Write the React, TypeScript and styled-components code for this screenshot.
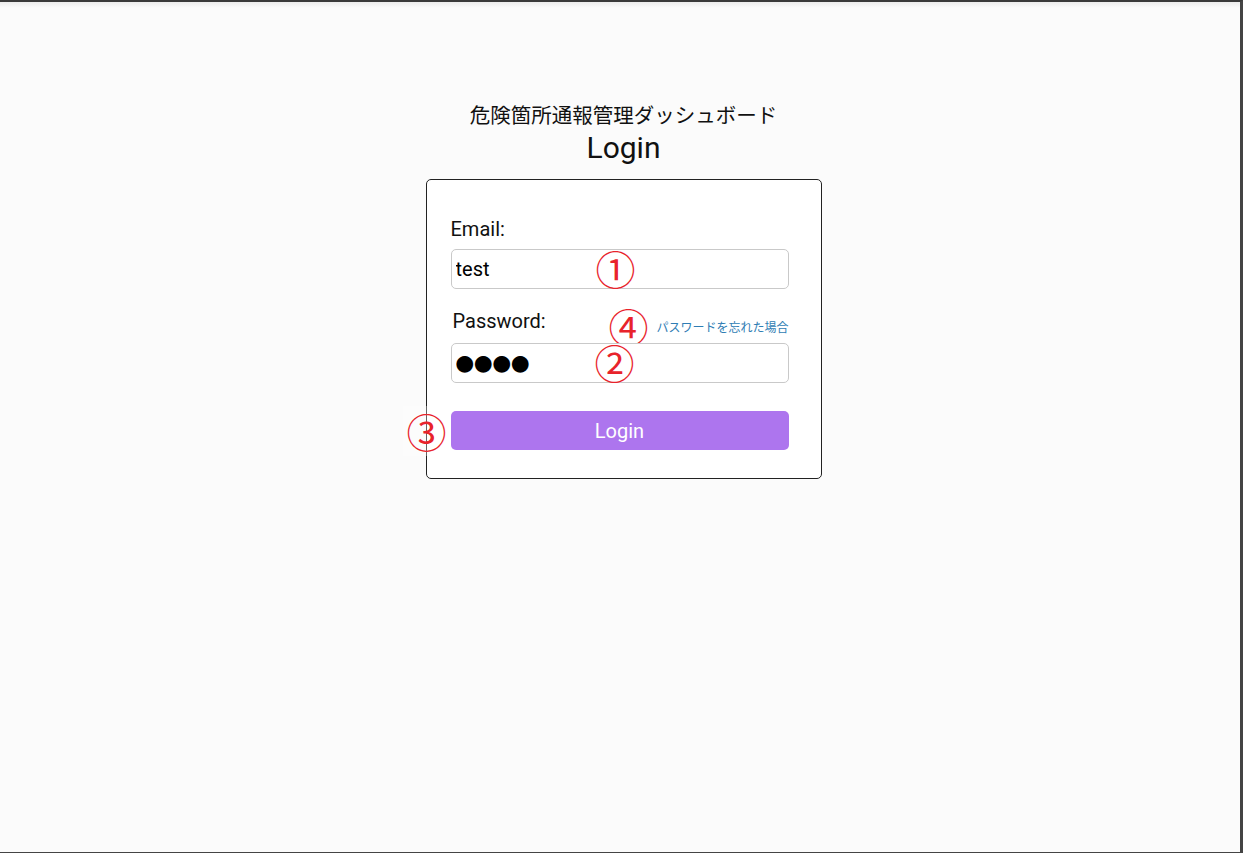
import React, { useState } from 'react';
import styled, { createGlobalStyle } from 'styled-components';

const GlobalStyle = createGlobalStyle`
  body {
    margin: 0;
    background: #fbfbfb;
    font-family: Roboto, 'Noto Sans CJK JP', sans-serif;
  }
`;

const Frame = styled.div`
  box-sizing: border-box;
  width: 1243px;
  height: 853px;
  border-top: 2px solid #3a3a3a;
  border-right: 3px solid #444;
  border-bottom: 1px solid #444;
  background: linear-gradient(to bottom, #ececec 0px, #fbfbfb 6px, #fbfbfb 100%);
  display: flex;
  flex-direction: column;
  align-items: center;
  padding: 97px 0 0 7px;
`;

const Title = styled.div`
  font-family: 'Noto Sans CJK JP', sans-serif;
  font-size: 20.5px;
  line-height: 30px;
  color: #111;
`;

const Heading = styled.h1`
  margin: 1px 0 0;
  font-family: Roboto, sans-serif;
  font-size: 30px;
  font-weight: 400;
  line-height: 36px;
  color: #111;
`;

const Card = styled.form`
  box-sizing: border-box;
  width: 396px;
  margin-top: 13px;
  padding: 37px 32px 28px 24px;
  background: #fff;
  border: 1px solid #222;
  border-radius: 5px;
  display: flex;
  flex-direction: column;
`;

const Label = styled.label<{ $indent?: number }>`
  display: block;
  font-size: 20px;
  line-height: 24px;
  color: #111;
  padding-left: ${(p) => p.$indent ?? 0}px;
`;

const EmailLabel = styled(Label)`
  margin-bottom: 8px;
`;

const PasswordRow = styled.div`
  position: relative;
  display: flex;
  justify-content: space-between;
  align-items: flex-end;
  margin: 20px 0 10px;
`;

const ForgotLink = styled.a`
  font-family: 'Noto Sans CJK JP', sans-serif;
  font-size: 12px;
  line-height: 16px;
  color: #2f7db4;
  text-decoration: none;
  margin-bottom: -2px;
  cursor: pointer;
`;

const FieldWrap = styled.div`
  position: relative;
`;

const Input = styled.input<{ $masked?: boolean }>`
  box-sizing: border-box;
  width: 338px;
  height: 40px;
  padding: 0 4px;
  border: 1px solid #c9c9c9;
  border-radius: 5px;
  background: #fff;
  color: #000;
  font-family: ${(p) => (p.$masked ? "'Noto Sans CJK JP', sans-serif" : 'Roboto, sans-serif')};
  font-size: ${(p) => (p.$masked ? '18.5px' : '20px')};
  outline: none;
`;

const LoginButton = styled.button`
  box-sizing: border-box;
  width: 338px;
  height: 39px;
  margin-top: 28px;
  border: none;
  border-radius: 5px;
  background: #ad75ee;
  color: #fff;
  font-family: Roboto, sans-serif;
  font-size: 20px;
  cursor: pointer;
`;

const ButtonWrap = styled.div`
  position: relative;
`;

const Marker = styled.span<{ $x: number; $y: number; $veil?: boolean }>`
  position: absolute;
  left: ${(p) => p.$x}px;
  top: ${(p) => p.$y}px;
  transform: translate(-50%, -50%);
  padding: ${(p) => (p.$veil ? '5px 4px' : '0')};
  background: ${(p) => (p.$veil ? 'rgba(255, 255, 255, 0.3)' : 'transparent')};
  font-family: 'Noto Sans CJK JP', sans-serif;
  font-size: 40px;
  line-height: 1;
  color: #e8232b;
  pointer-events: none;
`;

export default function App() {
  const [email, setEmail] = useState('test');
  const [password, setPassword] = useState('●●●●');

  return (
    <>
      <GlobalStyle />
      <Frame>
        <Title>危険箇所通報管理ダッシュボード</Title>
        <Heading>Login</Heading>
        <Card onSubmit={(e) => e.preventDefault()}>
          <EmailLabel htmlFor="email">Email:</EmailLabel>
          <FieldWrap>
            <Input id="email" value={email} onChange={(e) => setEmail(e.target.value)} />
            <Marker $x={165} $y={19}>①</Marker>
          </FieldWrap>

          <PasswordRow>
            <Label htmlFor="password" $indent={2}>Password:</Label>
            <ForgotLink>パスワードを忘れた場合</ForgotLink>
            <Marker $x={178} $y={17} $veil>④</Marker>
          </PasswordRow>
          <FieldWrap>
            <Input
              id="password"
              $masked
              value={password}
              onChange={(e) => setPassword(e.target.value)}
            />
            <Marker $x={164} $y={19}>②</Marker>
          </FieldWrap>

          <ButtonWrap>
            <LoginButton type="submit">Login</LoginButton>
            <Marker $x={-24} $y={48} $veil>③</Marker>
          </ButtonWrap>
        </Card>
      </Frame>
    </>
  );
}
